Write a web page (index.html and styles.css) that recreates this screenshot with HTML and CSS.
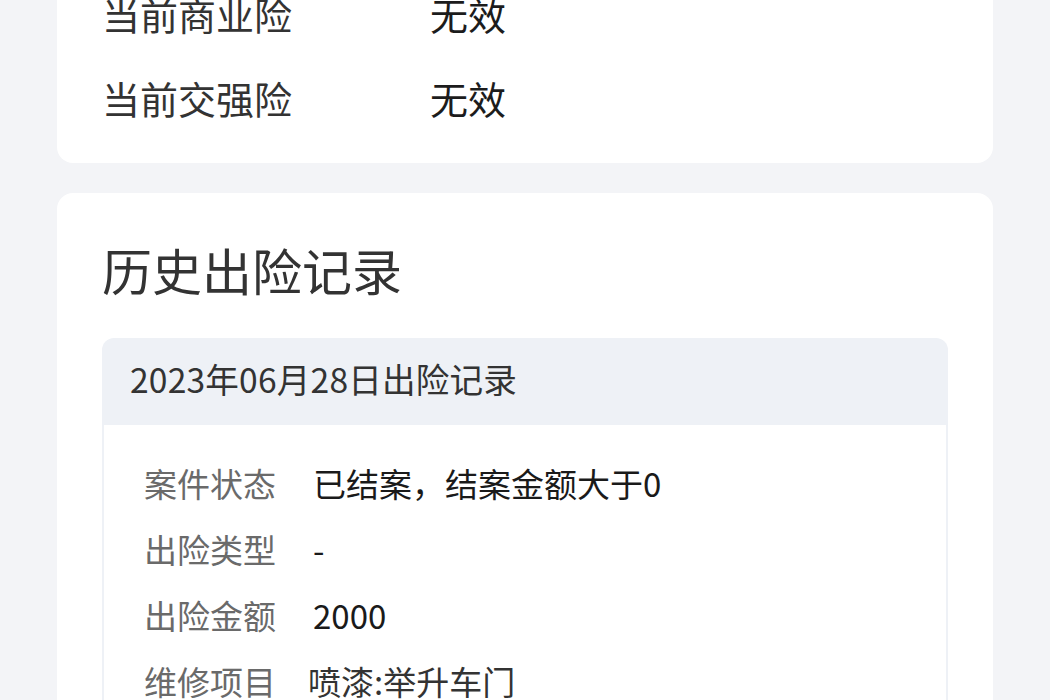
FILE: index.html
```html
<!DOCTYPE html>
<html lang="zh-CN">
<head>
<meta charset="utf-8">
<link rel="stylesheet" href="styles.css">
</head>
<body>
<div class="page">
  <section class="card card-current">
    <div class="cur-row"><span class="cur-label">当前商业险</span><span class="cur-value">无效</span></div>
    <div class="cur-row"><span class="cur-label">当前交强险</span><span class="cur-value">无效</span></div>
  </section>
  <section class="card card-history">
    <h2 class="title">历史出险记录</h2>
    <div class="record">
      <div class="record-head">2023年06月28日出险记录</div>
      <div class="record-body">
        <div class="rec-row"><span class="rec-label">案件状态</span><span class="rec-value">已结案，结案金额大于0</span></div>
        <div class="rec-row"><span class="rec-label">出险类型</span><span class="rec-value">-</span></div>
        <div class="rec-row"><span class="rec-label">出险金额</span><span class="rec-value">2000</span></div>
        <div class="rec-row"><span class="rec-label">维修项目</span><span class="rec-value rec-value-tight">喷漆:举升车门</span></div>
      </div>
    </div>
  </section>
</div>
</body>
</html>
```
FILE: styles.css
```css
html, body {
  margin: 0;
  padding: 0;
  background: #f3f4f7;
  font-family: "Noto Sans CJK SC", "Noto Sans", sans-serif;
  overflow: hidden;
}
.page {
  width: 936px;
  margin-left: 57px;
  display: flex;
  flex-direction: column;
  gap: 30px;
}
.card {
  background: #ffffff;
  border-radius: 16px;
  padding: 0 45px;
}
.card-current {
  margin-top: -60px;
  padding-top: 47px;
  padding-bottom: 38px;
  display: flex;
  flex-direction: column;
  gap: 30px;
}
.cur-row {
  display: grid;
  grid-template-columns: 328px 1fr;
  font-size: 38px;
  line-height: 54px;
}
.cur-label { color: #333333; }
.cur-value { color: #1c1c1c; }
.card-history {
  padding-top: 41px;
  padding-bottom: 40px;
}
.title {
  margin: 0 0 34px 0;
  font-size: 50px;
  font-weight: 400;
  line-height: 70px;
  color: #333333;
}
.record {
  border-radius: 12px;
  overflow: hidden;
  background: #eef1f6;
}
.record-head {
  height: 87px;
  line-height: 82px;
  padding-left: 28px;
  font-size: 33.6px;
  letter-spacing: 0.2px;
  color: #333333;
}
.record-body {
  margin: 0 2px;
  background: #ffffff;
  padding: 25px 0 20px 40px;
}
.rec-row {
  display: flex;
  font-size: 33px;
  line-height: 66px;
}
.rec-label {
  color: #6a6a6a;
  width: 132px;
  margin-right: 37px;
}
.rec-value { color: #1a1a1a; }
.rec-value-tight { margin-left: -5px; color: #333333; }
```
